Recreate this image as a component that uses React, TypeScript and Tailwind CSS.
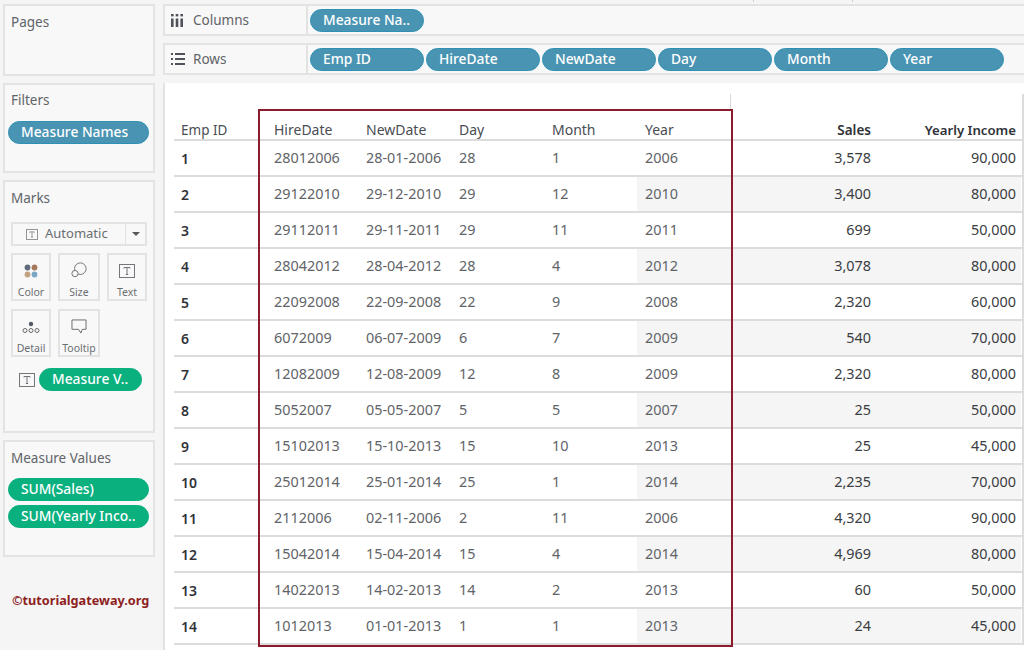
const font = "font-['Noto_Sans','Open_Sans',sans-serif]";

type Row = [string, string, string, string, string, string, string, string];

const rows: Row[] = [
  ["1", "28012006", "28-01-2006", "28", "1", "2006", "3,578", "90,000"],
  ["2", "29122010", "29-12-2010", "29", "12", "2010", "3,400", "80,000"],
  ["3", "29112011", "29-11-2011", "29", "11", "2011", "699", "50,000"],
  ["4", "28042012", "28-04-2012", "28", "4", "2012", "3,078", "80,000"],
  ["5", "22092008", "22-09-2008", "22", "9", "2008", "2,320", "60,000"],
  ["6", "6072009", "06-07-2009", "6", "7", "2009", "540", "70,000"],
  ["7", "12082009", "12-08-2009", "12", "8", "2009", "2,320", "80,000"],
  ["8", "5052007", "05-05-2007", "5", "5", "2007", "25", "50,000"],
  ["9", "15102013", "15-10-2013", "15", "10", "2013", "25", "45,000"],
  ["10", "25012014", "25-01-2014", "25", "1", "2014", "2,235", "70,000"],
  ["11", "2112006", "02-11-2006", "2", "11", "2006", "4,320", "90,000"],
  ["12", "15042014", "15-04-2014", "15", "4", "2014", "4,969", "80,000"],
  ["13", "14022013", "14-02-2013", "14", "2", "2013", "60", "50,000"],
  ["14", "1012013", "01-01-2013", "1", "1", "2013", "24", "45,000"],
];

const gridCols = "grid grid-cols-[93px_92px_93px_93px_92px_94px_148px_142px]";

const Pill = ({ label, green, className }: { label: string; green?: boolean; className?: string }) => (
  <div
    className={`flex h-[23px] items-center rounded-full border pl-3 text-[13.8px] font-medium whitespace-nowrap text-white ${
      green ? "border-[#0bb07f] bg-[#0bb07f]" : "border-[#2f90b4] bg-[#4a94b3]"
    } ${className ?? ""}`}
  >
    {label}
  </div>
);

const Card = ({ title, className, children }: { title: string; className: string; children?: React.ReactNode }) => (
  <div className={`border-2 border-[#e3e3e3] bg-[#f8f8f8] ${className}`}>
    <div className="pl-[6px] text-[13.5px] leading-5 text-[#5f6468]">{title}</div>
    {children}
  </div>
);

const TextIcon = ({ className }: { className?: string }) => (
  <svg viewBox="0 0 16 14" className={className}>
    <rect x="0.5" y="0.5" width="15" height="13" fill="none" stroke="#77737a" />
    <path d="M5 4.5V3.5H11V4.5M8 3.5V10.5M6.8 10.5H9.2" fill="none" stroke="#77737a" />
  </svg>
);

const MarkButton = ({ label, children }: { label: string; children: React.ReactNode }) => (
  <div className="flex h-12 w-full flex-col items-center border-2 border-[#e3e3e3] bg-[#f8f8f8]">
    <div className="flex h-[23px] items-end justify-center">{children}</div>
    <div className="mt-[7px] text-[10.5px] leading-[14px] text-[#6a6e72]">{label}</div>
  </div>
);

const Sidebar = () => (
  <div className="flex w-[152px] shrink-0 flex-col gap-[7px]">
    <Card title="Pages" className="h-[72px] pt-[6px]" />
    <Card title="Filters" className="h-[90px] pt-[5px]">
      <div className="pt-[11px] pr-[4px] pl-[3px]">
        <Pill label="Measure Names" />
      </div>
    </Card>
    <Card title="Marks" className="h-[253px] pt-[6px]">
      <div className="mt-[14px] ml-[6px] flex h-6 w-[136px] items-center border-2 border-[#e3e3e3] bg-[#f8f8f8] text-[#6a6e72]">
        <div className="flex flex-1 items-center gap-[7px] pl-[13px] text-[13px]">
          <TextIcon className="h-[11px] w-[12px]" />
          Automatic
        </div>
        <div className="flex h-full w-[20px] items-center justify-center border-l border-[#e3e3e3]">
          <div className="h-0 w-0 border-x-[4px] border-t-[4px] border-x-transparent border-t-[#55595c]" />
        </div>
      </div>
      <div className="mt-[7px] ml-[6px] grid w-[136px] grid-cols-[40px_42px_40px] gap-x-[7px] gap-y-2">
        <MarkButton label="Color">
          <svg viewBox="0 0 16 16" className="h-[14px] w-[14px]">
            <circle cx="4" cy="4" r="3.3" fill="#5f6b78" />
            <circle cx="12" cy="4" r="3.3" fill="#a5795c" />
            <circle cx="4" cy="12" r="3.3" fill="#c2a27f" />
            <circle cx="12" cy="12" r="3.3" fill="#7ba7c4" />
          </svg>
        </MarkButton>
        <MarkButton label="Size">
          <svg viewBox="0 0 18 18" className="h-[16px] w-[16px]" fill="none" stroke="#66686c" strokeWidth="1">
            <circle cx="10.5" cy="7.5" r="6.5" />
            <circle cx="4.5" cy="13" r="3.5" fill="#f8f8f8" />
          </svg>
        </MarkButton>
        <MarkButton label="Text">
          <TextIcon className="h-[14px] w-[16px]" />
        </MarkButton>
        <MarkButton label="Detail">
          <svg viewBox="0 0 18 12" className="h-[13px] w-[18px]" fill="none" stroke="#66686c" strokeWidth="1">
            <circle cx="9" cy="2.5" r="2.2" fill="#555a62" stroke="none" />
            <circle cx="3" cy="9" r="2" />
            <circle cx="9" cy="9" r="2" />
            <circle cx="15" cy="9" r="2" />
          </svg>
        </MarkButton>
        <MarkButton label="Tooltip">
          <svg viewBox="0 0 17 16" className="h-[15px] w-[16px]" fill="none" stroke="#66686c" strokeWidth="1">
            <path d="M1 1H16V11H12L10.5 15L8 11H1Z" />
          </svg>
        </MarkButton>
      </div>
      <div className="mt-[11px] ml-[14px] flex items-center gap-[4px]">
        <TextIcon className="h-[14px] w-[16px]" />
        <Pill green label="Measure V.." className="w-[103px]" />
      </div>
    </Card>
    <Card title="Measure Values" className="h-[117px] pt-[6px]">
      <div className="flex flex-col gap-[4px] pt-[10px] pr-[4px] pl-[3px]">
        <Pill green label="SUM(Sales)" />
        <Pill green label="SUM(Yearly Inco.." />
      </div>
    </Card>
    <div className="mt-[28px] pl-[9px] text-[12.7px] leading-4 font-bold whitespace-nowrap text-[#8e1f1f]">
      ©tutorialgateway.org
    </div>
  </div>
);

const Shelf = ({ title, icon, pills }: { title: string; icon: React.ReactNode; pills: string[] }) => (
  <div className="flex h-[32px] border-y-2 border-l-2 border-[#e3e3e3] bg-[#f8f8f8]">
    <div className="flex w-[143px] shrink-0 items-center border-r-2 border-[#e3e3e3] pl-[6px] text-[13.5px] text-[#5f6468]">
      <div className="flex w-[22px] justify-start">{icon}</div>
      {title}
    </div>
    <div className="flex items-center gap-[2px] pl-[2px]">
      {pills.map((p) => (
        <Pill key={p} label={p} className="w-[114px]" />
      ))}
    </div>
  </div>
);

const Table = () => (
  <div className="relative mt-px h-[567px] border-l-2 border-[#e3e3e3] bg-white pl-[9px]">
    {/* header */}
    <div className={`${gridCols} h-[58px] items-end border-b-2 border-[#dcdcdc] text-[14px] leading-[18px] text-[#4a4d52]`}>
      <div className="pl-[7px] text-[13.5px]">Emp ID</div>
      {["HireDate", "NewDate", "Day", "Month"].map((h) => (
        <div key={h} className="pl-[7px]">{h}</div>
      ))}
      <div className="pl-2">Year</div>
      <div className="pr-2 text-right text-[13.5px] font-semibold text-[#2f3338]">Sales</div>
      <div className="pr-[5px] text-right text-[13.2px] font-semibold text-[#2f3338]">Yearly Income</div>
    </div>
    {rows.map((r, i) => (
      <div key={r[0]} className={`${gridCols} h-9 items-center border-b-2 border-[#dcdcdc] text-[14.4px] text-[#5f6468]`}>
        <div className="pl-[7px] text-[14px] font-semibold text-[#2f3338]">{r[0]}</div>
        {r.slice(1, 5).map((v, j) => (
          <div key={j} className="pl-[7px]">{v}</div>
        ))}
        <div className={`flex h-full items-center pl-2 ${i % 2 === 1 ? "bg-[#f5f5f5]" : ""}`}>{r[5]}</div>
        <div className={`flex h-full items-center justify-end pr-2 text-[#3a3d42] ${i % 2 === 1 ? "bg-[#f5f5f5]" : ""}`}>{r[6]}</div>
        <div className={`flex h-full items-center justify-end pr-[5px] text-[#3a3d42] ${i % 2 === 1 ? "bg-[#f5f5f5]" : ""}`}>{r[7]}</div>
      </div>
    ))}
    {/* pane dividers */}
    <div className="absolute top-[11px] left-[565px] h-[16px] w-px bg-[#d8d8d8]" />
    <div className="absolute top-[11px] left-[857px] h-[550px] w-[2px] bg-[#dcdcdc]" />
    {/* red highlight box */}
    <div className="absolute top-[26px] left-[93px] h-[538px] w-[475px] border-[2.5px] border-[#8a1c2c]" />
  </div>
);

export default function App() {
  return (
    <div className={`relative flex h-[650px] w-[1024px] gap-[8px] overflow-hidden bg-[#f5f5f5] pt-1 pl-[3px] ${font}`}>
      <div className="absolute top-0 left-[753px] h-[2px] w-px bg-[#cfcfcf]" />
      <div className="absolute top-0 left-[852px] h-[2px] w-px bg-[#cfcfcf]" />
      <Sidebar />
      <div className="flex min-w-0 flex-1 flex-col gap-[7px]">
        <Shelf
          title="Columns"
          pills={["Measure Na.."]}
          icon={
            <svg viewBox="0 0 12 13" className="h-[13px] w-3" fill="#50545a">
              <rect x="0" y="0" width="2.6" height="2.4" />
              <rect x="0" y="4.5" width="2.6" height="8.5" />
              <rect x="4.7" y="0" width="2.6" height="2.4" />
              <rect x="4.7" y="4.5" width="2.6" height="8.5" />
              <rect x="9.4" y="0" width="2.6" height="2.4" />
              <rect x="9.4" y="4.5" width="2.6" height="8.5" />
            </svg>
          }
        />
        <Shelf
          title="Rows"
          pills={["Emp ID", "HireDate", "NewDate", "Day", "Month", "Year"]}
          icon={
            <svg viewBox="0 0 14 12" className="h-3 w-[14px]" fill="#50545a">
              <rect x="0" y="0" width="2" height="2" />
              <rect x="4" y="0" width="10" height="2" />
              <rect x="0" y="5" width="2" height="2" />
              <rect x="4" y="5" width="10" height="2" />
              <rect x="0" y="10" width="2" height="2" />
              <rect x="4" y="10" width="10" height="2" />
            </svg>
          }
        />
        <Table />
      </div>
    </div>
  );
}
